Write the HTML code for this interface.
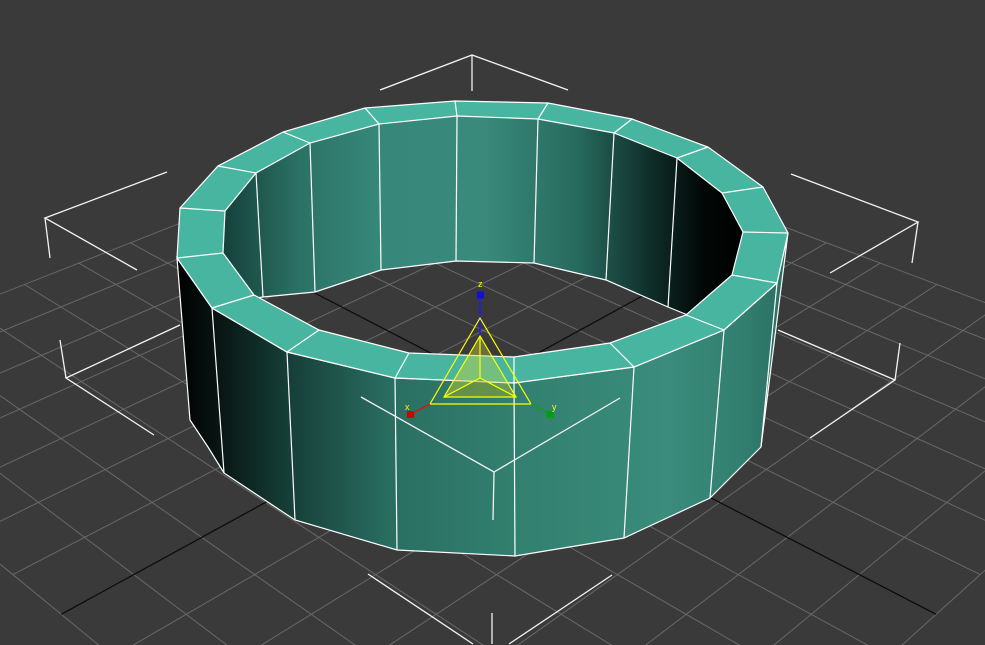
<!DOCTYPE html>
<html><head><meta charset="utf-8"><style>
html,body{margin:0;padding:0;background:#3a3a3a;width:985px;height:645px;overflow:hidden}
svg{display:block;overflow:hidden}
text{font-family:"Liberation Sans",sans-serif}
</style></head><body>
<svg id="s" width="985" height="645" viewBox="0 0 985 645" xmlns="http://www.w3.org/2000/svg">
<defs>
<clipPath id="cp"><rect x="0" y="0" width="985" height="645"/></clipPath>
<linearGradient id="outer" gradientUnits="userSpaceOnUse" x1="177" y1="0" x2="790" y2="0">
<stop offset="0" stop-color="#000"/>
<stop offset="0.07" stop-color="#081614"/>
<stop offset="0.18" stop-color="#163e37"/>
<stop offset="0.35" stop-color="#2a6e62"/>
<stop offset="0.55" stop-color="#32806f"/>
<stop offset="0.8" stop-color="#3a8c7c"/>
<stop offset="0.92" stop-color="#327f70"/>
<stop offset="1" stop-color="#2a6e62"/>
</linearGradient>
<linearGradient id="inner" gradientUnits="userSpaceOnUse" x1="222" y1="0" x2="745" y2="0">
<stop offset="0" stop-color="#14403a"/>
<stop offset="0.15" stop-color="#2c7266"/>
<stop offset="0.3" stop-color="#36887a"/>
<stop offset="0.5" stop-color="#3a8a7c"/>
<stop offset="0.68" stop-color="#276a5e"/>
<stop offset="0.82" stop-color="#0f2e29"/>
<stop offset="0.92" stop-color="#020706"/>
<stop offset="1" stop-color="#000"/>
</linearGradient>
</defs>
<g clip-path="url(#cp)">
<g id="grid" stroke="#686868" stroke-width="1" fill="none"></g>
<g id="axes" stroke="#0a0a0a" stroke-width="1.2" fill="none"></g>
<g stroke="#f2f2f2" stroke-width="1.3" fill="none">
<polyline points="380,90 472,55 568,90"/><line x1="472" y1="55" x2="472" y2="91"/>
<polyline points="167,172 45,218 137,270"/><line x1="45" y1="218" x2="50" y2="258"/>
<polyline points="180,325 66,378 154,435"/><line x1="66" y1="378" x2="60" y2="340"/>
<polyline points="791,174 918,222 830,273"/><line x1="918" y1="222" x2="912" y2="263"/>
<polyline points="778,330 895,380 810,438"/><line x1="895" y1="380" x2="900" y2="343"/>
<line x1="368" y1="574" x2="473" y2="644"/><line x1="492" y1="613" x2="492" y2="644"/><line x1="509" y1="644" x2="612" y2="575"/>
</g>
<polygon fill="url(#inner)" points="223,253 225,211 256,173 310,143 379,124 457,116 538,119 614,133 677,158 722,193 743,232 732,275 700,320 668,307 606,280 534,263 456,261 381,270 315,292 263,297 240,300"/>
<g stroke="#fff" stroke-width="1.2">
<line x1="256" y1="173" x2="263" y2="297"/><line x1="310" y1="143" x2="315" y2="292"/>
<line x1="379" y1="124" x2="381" y2="270"/><line x1="457" y1="116" x2="456" y2="261"/>
<line x1="538" y1="119" x2="534" y2="263"/><line x1="614" y1="133" x2="606" y2="280"/>
<line x1="677" y1="158" x2="668" y2="307"/>
</g>
<polyline fill="none" stroke="#fff" stroke-width="1.2" points="240,300 263,297 315,292 381,270 456,261 534,263 606,280 668,307 700,320"/>
<polygon fill="url(#outer)" stroke="#fff" stroke-width="1.2" points="177,258 212,308 287,352 395,378 514,383 634,367 724,330 777,283 788,233 761,447 710,498 624,538 515,556 397,550 295,520 224,473 208,447 190,420"/>
<g stroke="#fff" stroke-width="1.2">
<line x1="212" y1="308" x2="224" y2="473"/><line x1="287" y1="352" x2="295" y2="520"/>
<line x1="395" y1="378" x2="397" y2="550"/><line x1="514" y1="383" x2="515" y2="556"/>
<line x1="634" y1="367" x2="624" y2="538"/><line x1="724" y1="330" x2="710" y2="498"/>
<line x1="777" y1="283" x2="761" y2="447"/>
</g>
<path fill="#48b5a0" stroke="#fff" stroke-width="1.2" fill-rule="evenodd" d="M455,101 L548,103 L632,119 L708,147 L763,187 L788,233 L777,283 L724,330 L634,367 L514,383 L395,378 L287,352 L212,308 L177,258 L180,208 L218,166 L283,132 L365,108 Z M457,116 L538,119 L614,133 L677,158 L722,193 L743,232 L732,275 L686,315 L610,343 L514,357 L409,353 L319,330 L254,295 L223,253 L225,211 L256,173 L310,143 L379,124 Z"/>
<g stroke="#fff" stroke-width="1.2">
<line x1="455" y1="101" x2="457" y2="116"/><line x1="548" y1="103" x2="538" y2="119"/>
<line x1="632" y1="119" x2="614" y2="133"/><line x1="708" y1="147" x2="677" y2="158"/>
<line x1="763" y1="187" x2="722" y2="193"/><line x1="788" y1="233" x2="743" y2="232"/>
<line x1="777" y1="283" x2="732" y2="275"/><line x1="724" y1="330" x2="686" y2="315"/>
<line x1="634" y1="367" x2="610" y2="343"/><line x1="514" y1="383" x2="514" y2="357"/>
<line x1="395" y1="378" x2="409" y2="353"/><line x1="287" y1="352" x2="319" y2="330"/>
<line x1="212" y1="308" x2="254" y2="295"/><line x1="177" y1="258" x2="223" y2="253"/>
<line x1="180" y1="208" x2="225" y2="211"/><line x1="218" y1="166" x2="256" y2="173"/>
<line x1="283" y1="132" x2="310" y2="143"/><line x1="365" y1="108" x2="379" y2="124"/>
</g>
<g stroke="#f2f2f2" stroke-width="1.3" fill="none">
<polyline points="361,397 494,472 620,398"/><line x1="494" y1="472" x2="493" y2="520"/>
</g>
<line x1="480" y1="295" x2="480" y2="336" stroke="#1a1aff" stroke-width="1.5"/>
<rect x="477" y="291.5" width="7" height="7" fill="#1010d0"/>
<text x="478" y="287" font-size="9" fill="#ffff00">z</text>
<polygon points="480,336 444,397 480,378" fill="rgba(200,210,60,0.45)"/>
<polygon points="480,336 516,397 480,378" fill="rgba(200,210,60,0.35)"/>
<polygon points="444,397 516,397 480,378" fill="rgba(150,170,40,0.5)"/>
<g stroke="#ffff00" stroke-width="1.2" fill="none">
<polygon points="480,318 430,404 531,404"/>
<polygon points="480,336 444,397 516,397"/>
<polyline points="444,397 480,378 516,397"/><line x1="480" y1="336" x2="480" y2="378"/>
</g>
<line x1="430" y1="404" x2="411" y2="414" stroke="#e01010" stroke-width="1.3"/>
<line x1="531" y1="404" x2="550" y2="414" stroke="#10a010" stroke-width="1.3"/>
<rect x="407" y="411" width="7" height="7" fill="#d00000"/>
<rect x="546.5" y="411" width="7" height="7" fill="#00a000"/>
<text x="405" y="410" font-size="9" fill="#ffff00">x</text>
<text x="552" y="410" font-size="9" fill="#ffff00">y</text>
</g>
</svg>
<script>
(function(){
var ns="http://www.w3.org/2000/svg";
var a=0.0272;
function P(u,v){var r=a*u,s=a*v,w=1+r+s;return[(486+2292*r-1428*s)/w,(381.6-608*r-608*s)/w];}
var g=document.getElementById("grid"),ax=document.getElementById("axes");
function L(p,q,par){var l=document.createElementNS(ns,"line");l.setAttribute("x1",p[0].toFixed(1));l.setAttribute("y1",p[1].toFixed(1));l.setAttribute("x2",q[0].toFixed(1));l.setAttribute("y2",q[1].toFixed(1));par.appendChild(l);}
var N=7;
for(var k=-7;k<=7;k++){
 if(k===0){L(P(0,-N),P(0,N),ax);L(P(-N,0),P(N,0),ax);continue;}
 L(P(k,-N),P(k,N),g);L(P(-N,k),P(N,k),g);
}
})();
</script>
</body></html>
